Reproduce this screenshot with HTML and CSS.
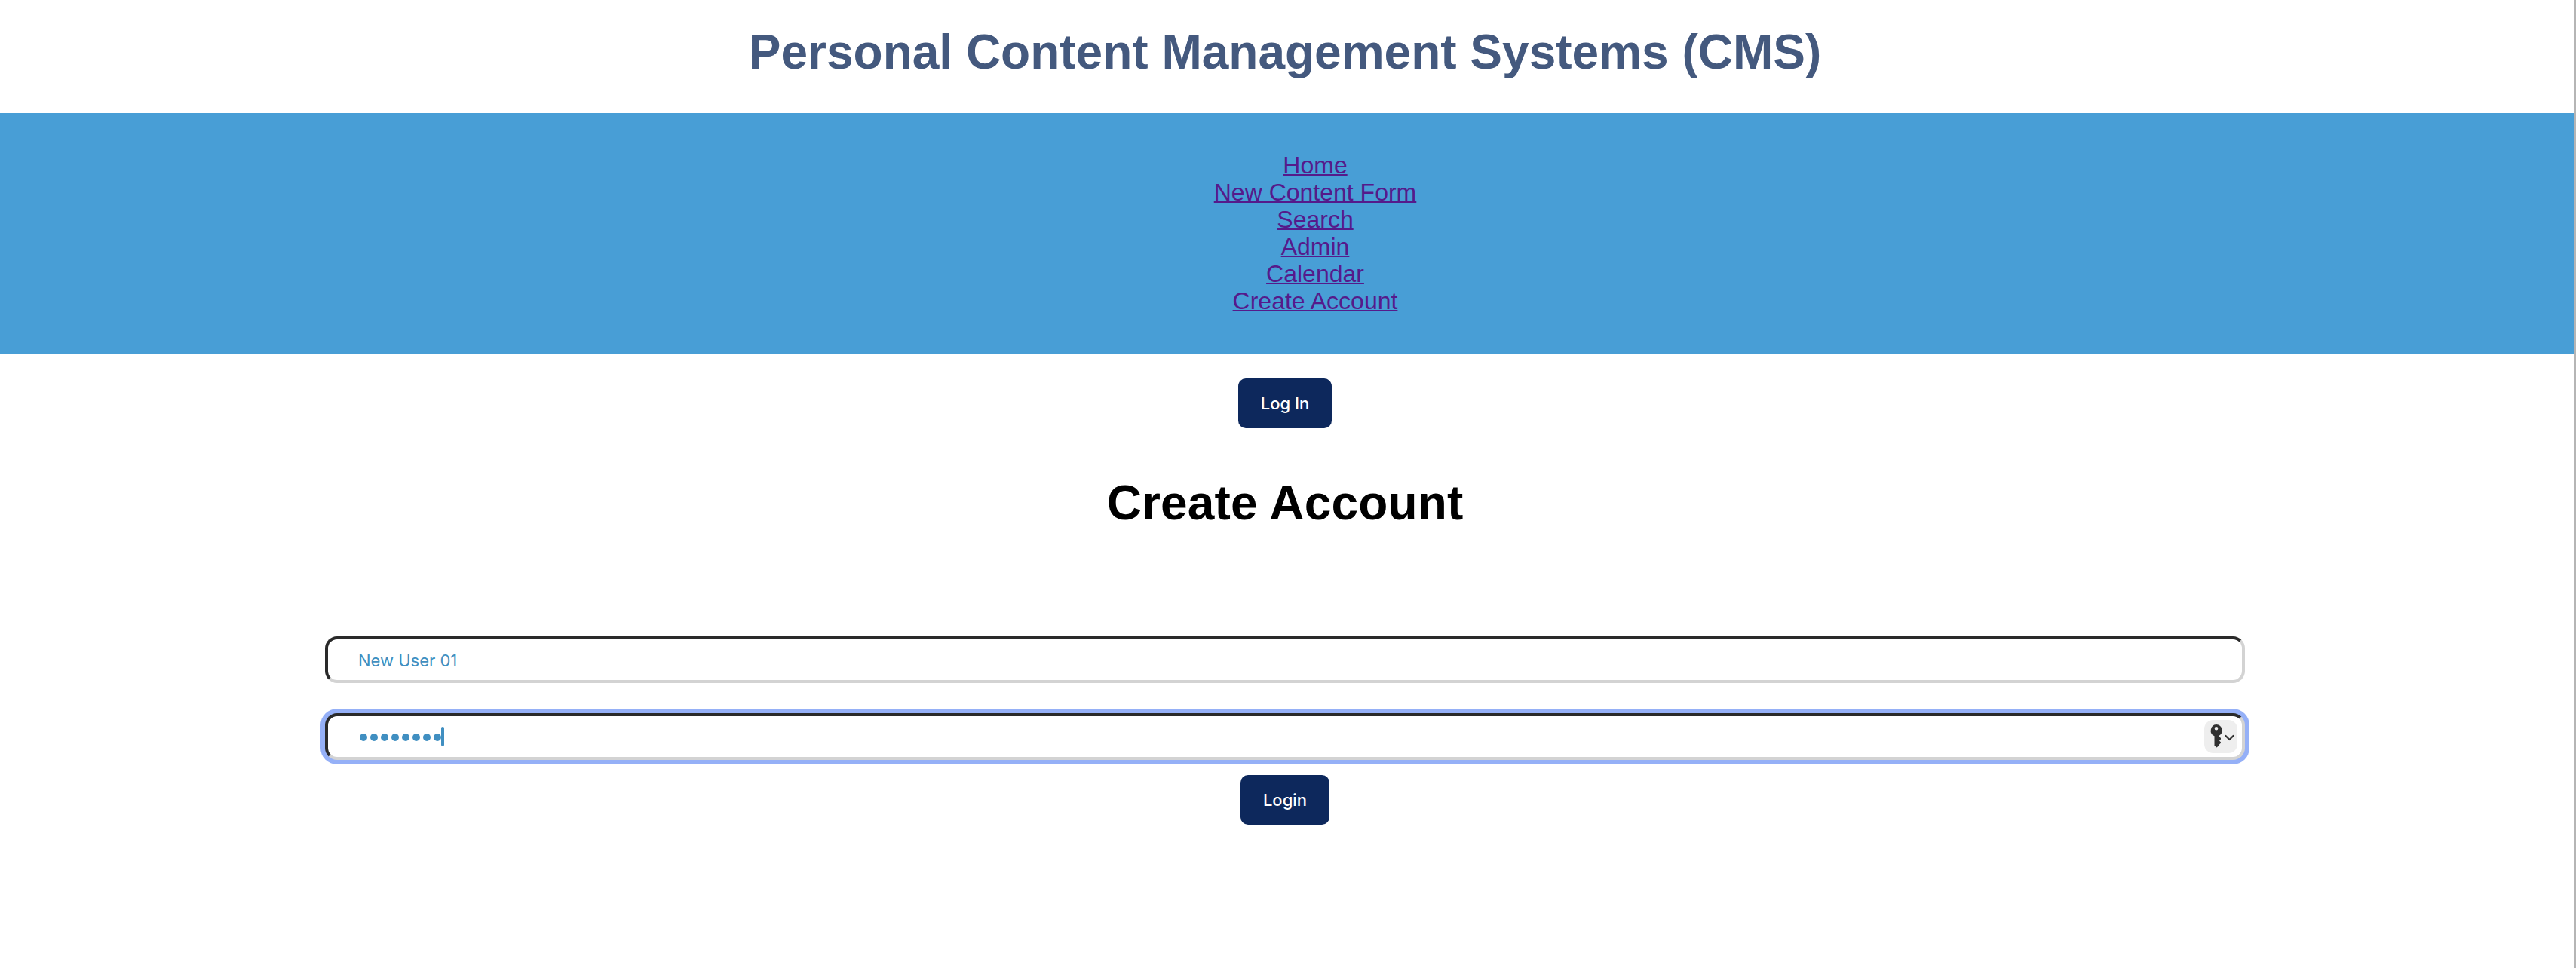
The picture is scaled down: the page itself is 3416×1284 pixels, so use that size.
FILE: index.html
```html
<!DOCTYPE html>
<html lang="en">
<head>
<meta charset="utf-8">
<title>Create Account</title>
<link rel="stylesheet" href="styles.css">
</head>
<body>
<header class="banner"><h1 class="site-title">Personal Content Management Systems (CMS)</h1></header>
<nav class="nav">
  <ul class="nav-list">
    <li><a href="#">Home</a></li>
    <li><a href="#">New Content Form</a></li>
    <li><a href="#">Search</a></li>
    <li><a href="#">Admin</a></li>
    <li><a href="#">Calendar</a></li>
    <li><a href="#">Create Account</a></li>
  </ul>
</nav>
<main class="content">
  <button class="btn btn-top" type="button">Log In</button>
  <h1 class="page-title">Create Account</h1>
  <form class="form">
    <div class="field"><span class="value">New User 01</span></div>
    <div class="field focused">
      <span class="dots"><i></i><i></i><i></i><i></i><i></i><i></i><i></i><i></i></span><span class="caret"></span>
      <span class="key">
        <svg width="44" height="44" viewBox="0 0 44 44">
          <path fill="#303030" fill-rule="evenodd" d="M16 6a8 8 0 0 1 3.500 15l0 .5 2.500 2.500v1.500l-2 2 2 2v1l-2 2v1l-3.500 3-3-2.500V21.300A8 8 0 0 1 16 6zM16 9a2.300 2.300 0 1 0 0 4.600a2.300 2.300 0 1 0 0-4.600z"/>
          <path fill="none" stroke="#303030" stroke-width="2.200" stroke-linecap="round" stroke-linejoin="round" d="M28.500 21l5 5 5-5"/>
        </svg>
      </span>
    </div>
    <button class="btn" type="button">Login</button>
  </form>
</main>
<div class="window-edge"></div>
</body>
</html>
```
FILE: styles.css
```css
* { box-sizing: border-box; }
body {
  margin: 0;
  min-height: 1284px;
  background: #fff;
  font-family: "Liberation Sans", Arial, sans-serif;
  text-align: center;
}
.banner { height: 150px; padding: 33px 8px 0 0; }
.site-title, .page-title { margin: 0; font-size: 64px; line-height: 73px; }
.site-title { color: #44597e; }
.nav { height: 320px; padding: 51px 8px 0 0; background: #489ed6; }
.nav-list { margin: 0; padding: 0 0 0 80px; list-style: none; font-size: 32px; line-height: 36px; }
.nav a { color: #551a8b; text-decoration-thickness: 2px; }
.content { display: flex; flex-direction: column; align-items: center; padding: 32px 8px 0 0; }
.btn {
  width: 118px;
  height: 66px;
  padding: 1px 0 0;
  border: 0;
  border-radius: 10px;
  background: #0d285c;
  color: #fff;
  font: 500 22px/65px Inter, sans-serif;
}
.btn-top { width: 124px; }
.page-title { margin-top: 63px; color: #000; letter-spacing: 0.15px; }
.form { display: flex; flex-direction: column; align-items: center; margin-top: 140px; width: 2546px; }
.field {
  display: flex;
  align-items: center;
  width: 2546px;
  height: 62px;
  padding: 0 6px 0 40px;
  border: 4px solid #d3d3d3;
  border-top-color: #2a2a2a;
  border-left-color: #2a2a2a;
  border-radius: 16px;
  background: #fff;
  color: #408fc1;
  font: 22px/26px Inter, sans-serif;
}
.focused { margin: 40px 0 20px; box-shadow: 0 0 0 6px #95b0f7; }
.value { padding-top: 1px; }
.dots { display: flex; gap: 4px; padding: 2px 0 0 2px; }
.dots i { width: 10px; height: 10px; border-radius: 50%; background: #408fc1; }
.caret { width: 4px; height: 26px; border-radius: 2px; background: #408fc1; }
.key { width: 44px; height: 44px; margin-left: auto; border-radius: 12px; background: #eee; }
.key svg { display: block; }
.window-edge { position: absolute; top: 0; right: 0; width: 2px; height: 1284px; background: #b5b5b5; }
```
